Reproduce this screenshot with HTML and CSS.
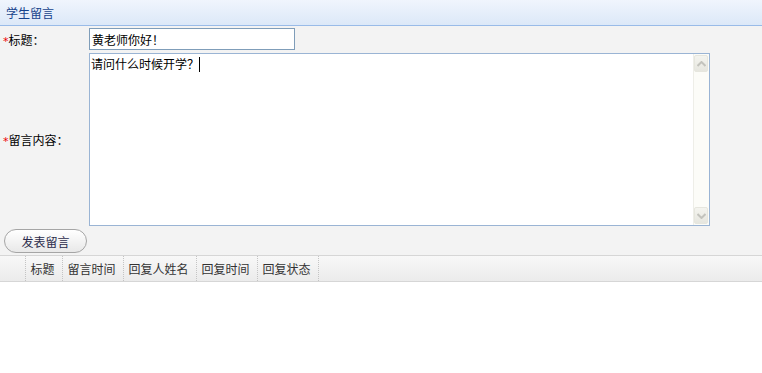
FILE: index.html
```html
<!DOCTYPE html>
<html lang="zh-CN">
<head>
    <meta charset="UTF-8">
    <title>学生留言</title>
    <link rel="stylesheet" href="styles.css">
</head>
<body>
    <div class="panel-title">学生留言</div>

    <form class="msg-form" onsubmit="return false;">
        <div class="form-row">
            <label class="form-label"><span class="req">*</span>标题：</label>
            <input type="text" class="title-input" value="黄老师你好！">
        </div>
        <div class="form-row form-row-tall">
            <label class="form-label"><span class="req">*</span>留言内容：</label>
            <div class="content-box">
                <div class="content-text">请问什么时候开学？<span class="caret"></span></div>
                <div class="scrollbar">
                    <div class="sb-btn">
                        <svg width="9" height="6" viewBox="0 0 9 6"><path d="M0.5 5 L4.5 1 L8.5 5" fill="none" stroke="#c3c3bd" stroke-width="2"/></svg>
                    </div>
                    <div class="sb-track"></div>
                    <div class="sb-btn">
                        <svg width="9" height="6" viewBox="0 0 9 6"><path d="M0.5 1 L4.5 5 L8.5 1" fill="none" stroke="#c3c3bd" stroke-width="2"/></svg>
                    </div>
                </div>
            </div>
        </div>
        <button type="submit" class="btn-submit">发表留言</button>
    </form>

    <table class="grid">
        <colgroup>
            <col class="w-check">
            <col class="w-title">
            <col class="w-time">
            <col class="w-name">
            <col class="w-time">
            <col class="w-time">
            <col>
        </colgroup>
        <thead>
            <tr>
                <th></th>
                <th>标题</th>
                <th>留言时间</th>
                <th>回复人姓名</th>
                <th>回复时间</th>
                <th>回复状态</th>
                <th class="col-fill"></th>
            </tr>
        </thead>
        <tbody></tbody>
    </table>
    <div class="grid-body"></div>
</body>
</html>
```

FILE: styles.css
```css
body {
    margin: 0;
    background: #f3f3f3;
    font-family: "Noto Sans CJK JP", "Noto Sans CJK SC", sans-serif;
    font-size: 12px;
    color: #000;
    height: 373px;
    display: flex;
    flex-direction: column;
}
.panel-title {
    height: 25px;
    line-height: 25px;
    padding-left: 6px;
    background: linear-gradient(#f0f5fd, #dce8f8);
    border-bottom: 1px solid #99bbe8;
    color: #15428b;
}
.msg-form {
    padding-top: 2px;
}
.form-row {
    display: flex;
    align-items: center;
    margin-bottom: 3px;
}
.form-label {
    width: 86px;
    padding-left: 3px;
}
.req {
    color: #e00;
    font-family: "DejaVu Sans", sans-serif;
    font-size: 11px;
}
.title-input {
    box-sizing: border-box;
    width: 206px;
    height: 22px;
    margin: 0;
    padding: 0 2px;
    border: 1px solid #7f9db9;
    font-family: inherit;
    font-size: 12px;
    outline: none;
}
.content-box {
    box-sizing: border-box;
    width: 621px;
    height: 173px;
    border: 1px solid #9ab4d4;
    background: #fff;
    display: flex;
}
.content-text {
    flex: 1;
    padding: 1px 1px;
    line-height: 17px;
}
.caret {
    display: inline-block;
    width: 1px;
    height: 15px;
    background: #000;
    vertical-align: -3px;
}
.scrollbar {
    width: 16px;
    border-left: 1px solid #eeeee8;
    background: #fcfcf8;
    display: flex;
    flex-direction: column;
    padding: 1px 1px 1px 0;
    box-sizing: border-box;
}
.sb-btn {
    height: 15px;
    background: linear-gradient(#f4f4ef, #e6e6df);
    border: 1px solid #e6e6de;
    border-radius: 2px;
    display: flex;
    align-items: center;
    justify-content: center;
}
.sb-track {
    flex: 1;
}
.btn-submit {
    box-sizing: border-box;
    width: 83px;
    height: 24px;
    margin: 0 0 2px 4px;
    border: 1px solid #a5a5a5;
    border-radius: 12px;
    background: linear-gradient(#ffffff, #e8e8e8);
    font-family: inherit;
    font-size: 12px;
    color: #2b2b4b;
    cursor: pointer;
}
.grid {
    border-collapse: collapse;
    table-layout: fixed;
    width: 100%;
    background: linear-gradient(#f8f8f8, #ebebeb);
    border-top: 1px solid #d6d6d6;
    border-bottom: 1px solid #d6d6d6;
}
.w-check { width: 25px; }
.w-title { width: 37px; }
.w-time { width: 61px; }
.w-name { width: 73px; }
.grid th {
    height: 25px;
    padding: 0 0 0 5px;
    font-weight: normal;
    text-align: left;
    color: #333;
    border-right: 1px dotted #c4c4c4;
    white-space: nowrap;
    overflow: hidden;
}
.grid th.col-fill {
    border-right: none;
}
.grid-body {
    flex: 1;
    background: #fff;
}
```
